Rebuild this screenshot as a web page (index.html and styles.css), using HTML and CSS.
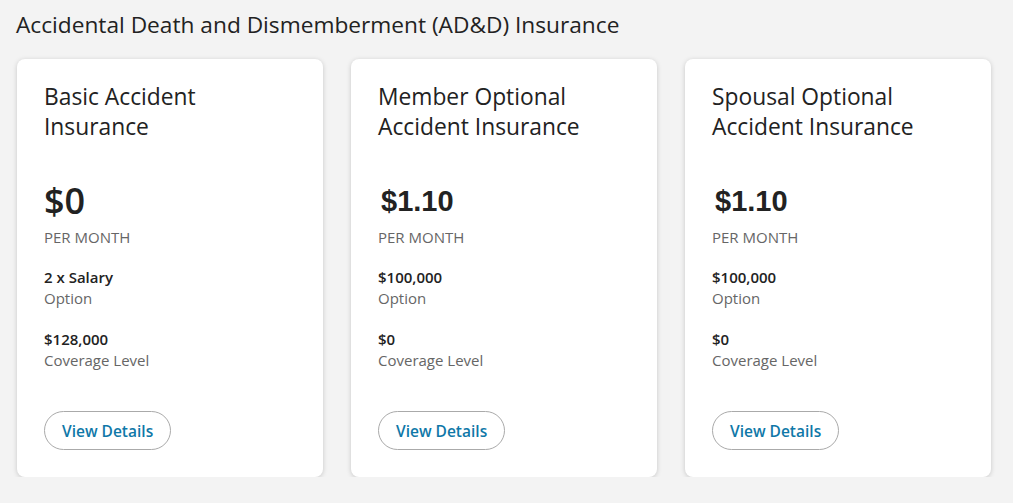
FILE: index.html
```html
<!DOCTYPE html>
<html lang="en">
<head>
  <meta charset="UTF-8">
  <title>AD&amp;D Insurance</title>
  <link rel="stylesheet" href="styles.css">
</head>
<body>

  <h2 class="section-title">Accidental Death and Dismemberment (AD&amp;D) Insurance</h2>

  <div class="plans">
    <div class="plan-card">
      <h3 class="plan-name">Basic Accident Insurance</h3>
      <div class="price">$0</div>
      <div class="price-label">PER MONTH</div>
      <div class="detail">
        <div class="detail-value">2 x Salary</div>
        <div class="detail-label">Option</div>
      </div>
      <div class="detail">
        <div class="detail-value">$128,000</div>
        <div class="detail-label">Coverage Level</div>
      </div>
      <button class="details-btn">View Details</button>
    </div>

    <div class="plan-card">
      <h3 class="plan-name">Member Optional Accident Insurance</h3>
      <div class="price price-alt">$1.10</div>
      <div class="price-label">PER MONTH</div>
      <div class="detail">
        <div class="detail-value">$100,000</div>
        <div class="detail-label">Option</div>
      </div>
      <div class="detail">
        <div class="detail-value">$0</div>
        <div class="detail-label">Coverage Level</div>
      </div>
      <button class="details-btn">View Details</button>
    </div>

    <div class="plan-card">
      <h3 class="plan-name">Spousal Optional Accident Insurance</h3>
      <div class="price price-alt">$1.10</div>
      <div class="price-label">PER MONTH</div>
      <div class="detail">
        <div class="detail-value">$100,000</div>
        <div class="detail-label">Option</div>
      </div>
      <div class="detail">
        <div class="detail-value">$0</div>
        <div class="detail-label">Coverage Level</div>
      </div>
      <button class="details-btn">View Details</button>
    </div>
  </div>

</body>
</html>
```

FILE: styles.css
```css
* { box-sizing: border-box; }

body {
  font-family: 'Open Sans', sans-serif;
  margin: 0;
  padding: 10px 16px 0 17px;
  background: #f3f3f3;
  color: #222;
}

.section-title {
  font-size: 22.7px;
  font-weight: 400;
  line-height: 30px;
  margin: 0 0 19px -1px;
}

.plans {
  display: flex;
  gap: 28px;
}

.plan-card {
  width: 306px;
  background: #fff;
  border-radius: 8px;
  box-shadow: 0 1px 5px rgba(0, 0, 0, 0.18);
  padding: 23px 27px 27px 27px;
}

.plan-name {
  font-size: 22.8px;
  font-weight: 400;
  line-height: 30px;
  margin: 0;
}

.price {
  margin-top: 37px;
  font-size: 36px;
  font-weight: 600;
  line-height: 44px;
}

.price-alt {
  font-family: 'Liberation Sans', Arial, sans-serif;
  font-weight: 700;
  font-size: 29px;
  padding-left: 3px;
}

.price-label {
  margin-top: 4px;
  font-size: 15px;
  line-height: 20px;
  color: #666;
}

.detail { margin-top: 20px; }

.detail-value {
  font-size: 15px;
  font-weight: 600;
  line-height: 20px;
}

.detail-label {
  font-size: 15px;
  line-height: 22px;
  color: #666;
}

.details-btn {
  margin-top: 40px;
  height: 39px;
  padding: 0 17px;
  background: #fff;
  border: 1px solid #aaa;
  border-radius: 20px;
  font-family: 'Open Sans', sans-serif;
  font-size: 15.5px;
  font-weight: 600;
  color: #0f78a8;
  cursor: pointer;
}
```
